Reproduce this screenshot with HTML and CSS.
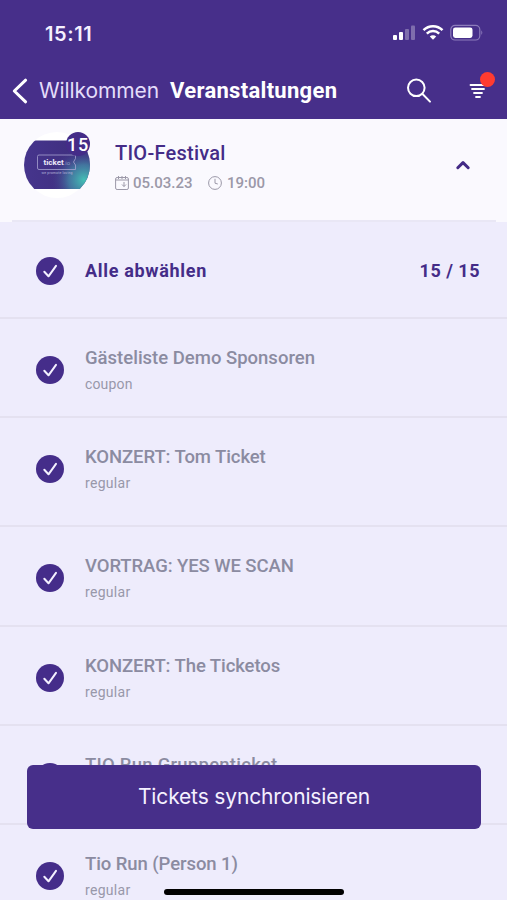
FILE: index.html
```html
<!DOCTYPE html>
<html lang="de">
<head>
<meta charset="utf-8">
<meta name="viewport" content="width=device-width, initial-scale=1">
<title>Veranstaltungen</title>
<link rel="stylesheet" href="styles.css">
</head>
<body>
<svg class="defs" width="0" height="0" aria-hidden="true">
  <symbol id="check" viewBox="0 0 28 28">
    <circle cx="14" cy="14" r="14" fill="#452d8a"/>
    <path d="M8.3 14.8 L12.5 19.3 L20 8.8" fill="none" stroke="#f4f1ff" stroke-width="2" stroke-linecap="round" stroke-linejoin="round"/>
  </symbol>
</svg>
<div class="screen">
  <header class="top">
    <div class="status">
      <span class="clock">15:11</span>
      <svg class="signals" width="92" height="18" viewBox="0 0 92 18">
        <g fill="#fff">
          <rect x="1" y="11" width="4" height="5" rx="1"/>
          <rect x="7" y="8" width="4" height="8" rx="1"/>
          <g opacity=".3"><rect x="13" y="5" width="4" height="11" rx="1"/><rect x="19" y="1.500" width="4" height="14.500" rx="1"/></g>
          <path d="M41 15.700 L37.800 12.500 A4.500 4.500 0 0 1 44.200 12.500 Z"/>
        </g>
        <g fill="none" stroke="#fff" stroke-width="2.500">
          <path d="M34.800 9.600 A8.900 8.900 0 0 1 47.200 9.600"/>
          <path d="M31.500 6.100 A13.500 13.500 0 0 1 50.500 6.100"/>
        </g>
        <rect x="58.800" y="1.400" width="29" height="14.600" rx="4.200" fill="none" stroke="#8d7cbb" stroke-width="1.200"/>
        <rect x="61" y="3.500" width="19.500" height="10.400" rx="2.300" fill="#fff"/>
        <path d="M89.300 6.300 Q91.300 8.700 89.300 11.100Z" fill="#8d7cbb"/>
      </svg>
    </div>
    <nav class="nav">
      <svg class="back" width="16" height="26" viewBox="0 0 16 26"><path d="M13.600 2.200 L2.300 13 L13.600 23.800" fill="none" stroke="#fff" stroke-width="3" stroke-linecap="round" stroke-linejoin="round"/></svg>
      <span class="parent">Willkommen</span>
      <h1 class="title">Veranstaltungen</h1>
      <svg class="search" width="26" height="26" viewBox="0 0 26 26"><g fill="none" stroke="#fff" stroke-width="2" stroke-linecap="round"><circle cx="10.300" cy="9.800" r="8.300"/><path d="M16.300 15.800 L24 23.600"/></g></svg>
      <span class="filter">
        <svg width="18" height="16" viewBox="0 0 18 16"><path d="M1.500 2H16.500M3 6H15M5 10H13M7 14H11" stroke="#fff" stroke-width="1.800" stroke-linecap="round"/></svg>
        <i class="dot"></i>
      </span>
    </nav>
  </header>

  <section class="event">
    <div class="avatar">
      <svg width="66" height="66" viewBox="0 0 66 66">
        <defs>
          <clipPath id="round"><circle cx="33" cy="33" r="33"/></clipPath>
          <linearGradient id="base" x1="0" y1="0" x2="1" y2="0"><stop offset="0" stop-color="#46358d"/><stop offset="1" stop-color="#3d2d7b"/></linearGradient>
          <radialGradient id="glow" cx="60" cy="48" r="34" gradientUnits="userSpaceOnUse"><stop offset="0" stop-color="#43c0b5"/><stop offset=".45" stop-color="#4486a7" stop-opacity=".8"/><stop offset="1" stop-color="#443188" stop-opacity="0"/></radialGradient>
        </defs>
        <circle cx="33" cy="33" r="33" fill="#fff"/>
        <g clip-path="url(#round)"><rect y="8.500" width="66" height="48.500" fill="url(#base)"/><rect y="8.500" width="66" height="48.500" fill="url(#glow)"/></g>
        <path d="M15 23 H51.500 V26.500 L49.500 30 L51.500 33 V37.500 H15 Q13.500 37.500 13.500 36 V24.500 Q13.500 23 15 23Z" fill="none" stroke="#a7a2d1" stroke-width=".8"/>
        <text x="19.500" y="33" class="logo">ticket<tspan class="logo-end">.io</tspan></text>
        <text x="17.500" y="42.200" class="tagline" textLength="31">we promote loving</text>
      </svg>
      <span class="badge">15</span>
    </div>
    <div class="info">
      <h2 class="name">TIO-Festival</h2>
      <div class="meta">
        <svg width="14" height="14" viewBox="0 0 14 14"><g fill="none" stroke="#9b98a8"><rect x=".6" y="1.500" width="12.800" height="12" rx="1.500"/><path d="M.6 4H13.400M3.500 0V3M7 0V3M10.500 0V3"/><path d="M9 6V10.500M7 8.500L9 10.500L11 8.500"/></g></svg>
        <span class="date">05.03.23</span>
        <svg class="time-icon" width="14" height="14" viewBox="0 0 14 14"><g fill="none" stroke="#9b98a8"><circle cx="7" cy="7" r="6.400"/><path d="M7 2.800V7.200L9.800 8"/></g></svg>
        <span class="time">19:00</span>
      </div>
    </div>
    <svg class="chevron" width="16" height="10" viewBox="0 0 16 10"><path d="M2.800 7.700 L8 2.600 L13.200 7.700" fill="none" stroke="#432a86" stroke-width="3" stroke-linecap="round" stroke-linejoin="round"/></svg>
  </section>

  <main class="list">
    <div class="row all">
      <svg class="tick"><use href="#check"/></svg>
      <strong class="all-label">Alle abwählen</strong>
      <strong class="count">15 / 15</strong>
    </div>
    <div class="row"><svg class="tick"><use href="#check"/></svg><div><div class="label guest">Gästeliste Demo Sponsoren</div><div class="kind coupon">coupon</div></div></div>
    <div class="row tall"><svg class="tick"><use href="#check"/></svg><div><div class="label caps">KONZERT: Tom Ticket</div><div class="kind">regular</div></div></div>
    <div class="row"><svg class="tick"><use href="#check"/></svg><div><div class="label caps">VORTRAG: YES WE SCAN</div><div class="kind">regular</div></div></div>
    <div class="row"><svg class="tick"><use href="#check"/></svg><div><div class="label caps">KONZERT: The Ticketos</div><div class="kind">regular</div></div></div>
    <div class="row"><svg class="tick"><use href="#check"/></svg><div><div class="label group">TIO Run Gruppenticket</div><div class="kind">regular</div></div></div>
    <div class="row"><svg class="tick"><use href="#check"/></svg><div><div class="label caps">Tio Run (Person 1)</div><div class="kind">regular</div></div></div>
  </main>
  <button class="sync">Tickets synchronisieren</button>
  <div class="home"></div>
</div>
</body>
</html>
```
FILE: styles.css
```css
* { box-sizing: border-box; }
body { margin: 0; font-family: Roboto, "Liberation Sans", sans-serif; }
h1, h2 { margin: 0; }
svg { display: block; flex: none; }
.defs { position: absolute; }
.screen { position: relative; width: 507px; height: 900px; overflow: hidden; background: #eeecfc; color: #442c88; }
.top { height: 119px; background: #472f8a; color: #fff; }
.status { display: flex; justify-content: space-between; align-items: center; height: 66px; padding: 0 23px 0 45px; }
.clock { padding-top: 2px; font: 600 20px/24px Inter, sans-serif; letter-spacing: .6px; color: #f5f1ff; }
.nav { display: flex; align-items: center; height: 49px; padding-left: 12px; white-space: nowrap; }
.parent { box-sizing: content-box; width: 120px; padding-left: 11px; font: 400 21px/28px Inter, sans-serif; letter-spacing: -.1px; color: #e4ddfa; }
.title { width: 168px; margin-left: 11px; padding-top: 1px; font-size: 22px; line-height: 28px; font-weight: 700; letter-spacing: .3px; }
.search { margin-left: 68px; }
.filter { position: relative; margin-left: 37px; }
.dot { position: absolute; top: -11px; left: 11px; width: 15px; height: 15px; border-radius: 50%; background: #ff3b30; }
.event { display: flex; height: 103px; padding: 13px 36px 0 24px; background: linear-gradient(#e9e7f5, #e9e7f5) 12px 100% / 484px 2px no-repeat #faf9fe; }
.avatar { position: relative; width: 66px; height: 66px; }
.badge { position: absolute; top: 0; right: 0; width: 24px; height: 24px; border-radius: 50%; background: #442c88; color: #fff; font-size: 18px; line-height: 26px; font-weight: 500; display: flex; justify-content: center; letter-spacing: .8px; }
.logo { font: 700 8px Roboto, sans-serif; fill: #eeeafa; }
.logo-end { font-weight: 400; font-size: 6px; fill: #8e9bc4; }
.tagline { font: 400 3.500px Roboto, sans-serif; fill: #b6b5d9; }
.info { margin-left: 25px; padding-top: 9px; }
.name { font-size: 20px; line-height: 24px; font-weight: 500; letter-spacing: .25px; }
.meta { display: flex; align-items: center; height: 20px; margin-top: 8px; font-size: 15px; font-weight: 500; color: #9b98a8; }
.date { width: 60px; margin-left: 4px; }
.time-icon { margin-left: 15px; }
.time { margin-left: 5px; }
.chevron { margin: 28px 0 0 auto; }
.row { display: flex; align-items: flex-start; height: 99.400px; padding: 37px 27px 0 36px; border-bottom: 2px solid #e4e1f0; }
.row.all { height: 97px; padding-top: 35px; }
.row.tall { height: 108.800px; }
.tick { width: 28px; height: 28px; margin-right: 21px; }
.all-label, .count { font-size: 18px; line-height: 28px; }
.all-label { letter-spacing: .68px; }
.count { margin-left: auto; letter-spacing: .5px; }
.label { margin-top: -10px; font-size: 18.500px; line-height: 24px; font-weight: 500; color: #8b8ba1; }
.caps { letter-spacing: -.08px; }
.group { letter-spacing: .25px; }
.kind { margin-top: 5px; font-size: 14px; line-height: 18px; letter-spacing: .3px; color: #9898aa; }
.coupon { letter-spacing: .15px; }
.sync { position: absolute; left: 27px; top: 764.500px; width: 454px; height: 64.500px; padding-top: 2px; border: 0; border-radius: 6px; background: #472f8a; color: #f5f1ff; font: 400 21px/28px Inter, sans-serif; letter-spacing: -.15px; }
.home { position: absolute; left: 164px; top: 889px; width: 180px; height: 6px; border-radius: 3px; background: #000; }
```
